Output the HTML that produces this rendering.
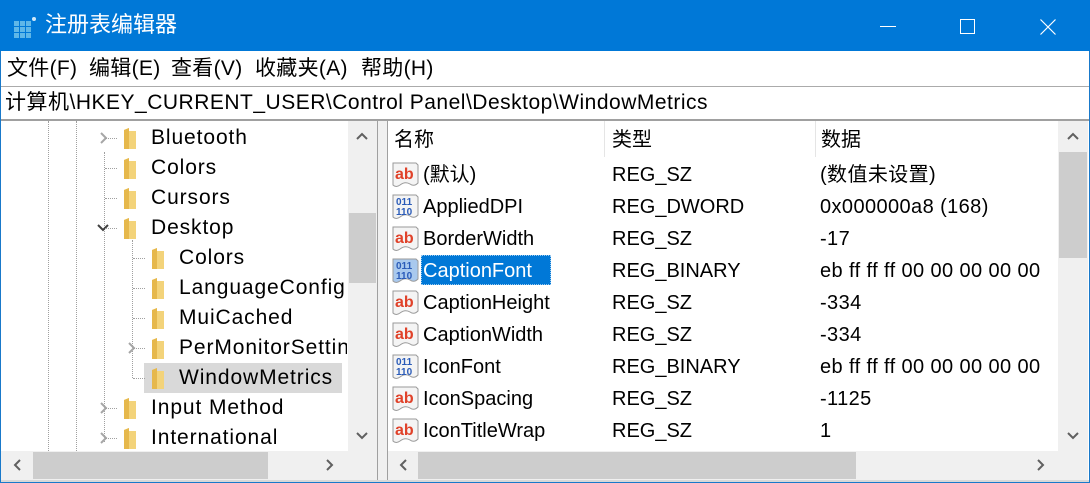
<!DOCTYPE html>
<html><head><meta charset="utf-8"><style>
*{margin:0;padding:0;box-sizing:border-box}
body{width:1090px;height:483px;overflow:hidden;background:#fff;font-family:"Liberation Sans","Noto Sans CJK SC",sans-serif;font-size:20px;color:#000;position:relative}
.a{position:absolute;white-space:nowrap}
.t{line-height:30px}
.dot{position:absolute;border-color:#a0a0a0;border-style:dotted;border-width:0}
.tr{font-size:21px;letter-spacing:0.9px}
</style></head><body>
<div class="a" style="left:0;top:0;width:1090px;height:483px;border:1px solid #1979ca"></div>
<div class="a" style="left:0;top:0;width:1090px;height:51px;background:#0078d7"></div>
<svg class="a" style="left:13px;top:16px" width="24" height="22" viewBox="0 0 24 22">
<g fill="#5fb7e8"><rect x="1" y="5" width="5" height="5"/><rect x="7" y="5" width="5" height="5"/><rect x="13" y="5" width="5" height="5"/><rect x="1" y="11" width="5" height="5"/><rect x="7" y="11" width="5" height="5"/><rect x="13" y="11" width="5" height="5"/><rect x="1" y="17" width="5" height="5"/><rect x="7" y="17" width="5" height="5"/><rect x="13" y="17" width="5" height="5"/></g><circle cx="21" cy="3" r="2" fill="#cfe8f8"/></svg>
<div class="a" style="left:45px;top:10px;color:#fff;font-size:22px;line-height:30px">注册表编辑器</div>
<div class="a" style="left:880px;top:26px;width:16px;height:1px;background:#fff"></div>
<div class="a" style="left:960px;top:19px;width:15px;height:15px;border:1px solid #fff"></div>
<svg class="a" style="left:1040px;top:19px" width="16" height="16"><path d="M0.5 0.5L15.5 15.5M15.5 0.5L0.5 15.5" stroke="#fff" stroke-width="1.2"/></svg>
<div class="a t" style="left:7px;top:54px;font-size:21px;letter-spacing:0.3px">文件(F)</div>
<div class="a t" style="left:89px;top:54px;font-size:21px;letter-spacing:0.3px">编辑(E)</div>
<div class="a t" style="left:171px;top:54px;font-size:21px;letter-spacing:0.3px">查看(V)</div>
<div class="a t" style="left:255px;top:54px;font-size:21px;letter-spacing:0.3px">收藏夹(A)</div>
<div class="a t" style="left:361px;top:54px;font-size:21px;letter-spacing:0.3px">帮助(H)</div>
<div class="a" style="left:1px;top:86px;width:1088px;height:1px;background:#ababab"></div>
<div class="a t" style="left:5px;top:88px;font-size:21px;letter-spacing:0.5px">计算机\HKEY_CURRENT_USER\Control Panel\Desktop\WindowMetrics</div>
<div class="a" style="left:1px;top:119px;width:1088px;height:2px;background:#a0a0a0"></div>
<div class="a" style="left:377px;top:121px;width:11px;height:360px;background:#f0f0f0;border-left:1px solid #a0a0a0;border-right:1px solid #a0a0a0"></div>
<div class="dot" style="left:48px;top:121px;height:330px;border-left-width:1px"></div>
<div class="dot" style="left:76px;top:121px;height:330px;border-left-width:1px"></div>
<div class="dot" style="left:104px;top:152px;height:290px;border-left-width:1px"></div>
<div class="dot" style="left:132px;top:240px;height:138px;border-left-width:1px"></div>
<div class="a" style="left:144px;top:363px;width:198px;height:30px;background:#d9d9d9"></div>
<div id="tree"></div>
<div class="a" style="left:348px;top:121px;width:29px;height:330px;background:#f0f0f0"></div>
<div class="a" style="left:349px;top:213px;width:27px;height:70px;background:#cdcdcd"></div>
<svg class="a" style="left:355px;top:131px" width="14" height="10"><path d="M2 8L7 3L12 8" stroke="#606060" stroke-width="2" fill="none"/></svg>
<svg class="a" style="left:355px;top:431px" width="14" height="10"><path d="M2 2L7 7L12 2" stroke="#606060" stroke-width="2" fill="none"/></svg>
<div class="a" style="left:1px;top:451px;width:376px;height:29px;background:#f0f0f0"></div>
<div class="a" style="left:33px;top:452px;width:235px;height:27px;background:#cdcdcd"></div>
<svg class="a" style="left:12px;top:458px" width="10" height="14"><path d="M8 2L3 7L8 12" stroke="#606060" stroke-width="2" fill="none"/></svg>
<svg class="a" style="left:325px;top:458px" width="10" height="14"><path d="M2 2L7 7L2 12" stroke="#606060" stroke-width="2" fill="none"/></svg>
<div class="a t" style="left:394px;top:125px">名称</div>
<div class="a t" style="left:612px;top:125px">类型</div>
<div class="a t" style="left:821px;top:125px">数据</div>
<div class="a" style="left:604px;top:121px;width:1px;height:36px;background:#e5e5e5"></div>
<div class="a" style="left:815px;top:121px;width:1px;height:36px;background:#e5e5e5"></div>
<div class="a" style="left:421px;top:255px;width:130px;height:30px;background:#0078d7;border:1px dotted #99c9ef"></div>
<div id="rows"></div>
<div class="a" style="left:1058px;top:121px;width:30px;height:330px;background:#f0f0f0"></div>
<div class="a" style="left:1059px;top:152px;width:28px;height:106px;background:#cdcdcd"></div>
<svg class="a" style="left:1066px;top:131px" width="14" height="10"><path d="M2 8L7 3L12 8" stroke="#606060" stroke-width="2" fill="none"/></svg>
<svg class="a" style="left:1066px;top:431px" width="14" height="10"><path d="M2 2L7 7L12 2" stroke="#606060" stroke-width="2" fill="none"/></svg>
<div class="a" style="left:388px;top:451px;width:700px;height:29px;background:#f0f0f0"></div>
<div class="a" style="left:418px;top:452px;width:438px;height:27px;background:#cdcdcd"></div>
<svg class="a" style="left:398px;top:458px" width="10" height="14"><path d="M8 2L3 7L8 12" stroke="#606060" stroke-width="2" fill="none"/></svg>
<svg class="a" style="left:1036px;top:458px" width="10" height="14"><path d="M2 2L7 7L2 12" stroke="#606060" stroke-width="2" fill="none"/></svg>
<div class="a" style="left:1px;top:480px;width:1088px;height:2px;background:#d8d8d8"></div>
<script>
var tree=[["Bluetooth",0,">"],["Colors",0,""],["Cursors",0,""],["Desktop",0,"v"],["Colors",1,""],["LanguageConfigu",1,""],["MuiCached",1,""],["PerMonitorSettin",1,">"],["WindowMetrics",1,""],["Input Method",0,">"],["International",0,">"]];
var h="";
tree.forEach(function(r,i){var y=123+i*30,l=r[1];var fx=l?150:122,tx=l?179:151,cx=l?126:98;
if(r[2]==">")h+='<svg class="a" style="left:'+cx+'px;top:'+(y+8)+'px" width="12" height="14"><path d="M3 2L8 7L3 12" stroke="#a6a6a6" stroke-width="2" fill="none"/></svg>';
if(r[2]=="v")h+='<svg class="a" style="left:'+(cx-2)+'px;top:'+(y+10)+'px" width="14" height="10"><path d="M2 2L7 7L12 2" stroke="#404040" stroke-width="2" fill="none"/></svg>';
h+='<div class="dot" style="left:'+(l?133:105)+'px;top:'+(y+15)+'px;width:12px;border-top-width:1px"></div>';
h+='<svg class="a" style="left:'+fx+'px;top:'+(y+4)+'px" width="16" height="24"><path d="M2 3L7 1L7 4L14 4L14 22L2 22Z" fill="#f3d37a"/><path d="M2 3L7 1L7 22L2 22Z" fill="#e6b84c"/></svg>';
h+='<div class="a t tr" style="left:'+tx+'px;top:'+y+'px;height:30px;overflow:hidden;width:'+(347-tx)+'px">'+r[0]+'</div>';});
document.getElementById("tree").innerHTML=h;
var rows=[["ab","(默认)","REG_SZ","(数值未设置)"],["b","AppliedDPI","REG_DWORD","0x000000a8 (168)"],["ab","BorderWidth","REG_SZ","-17"],["b","CaptionFont","REG_BINARY","eb ff ff ff 00 00 00 00 00"],["ab","CaptionHeight","REG_SZ","-334"],["ab","CaptionWidth","REG_SZ","-334"],["b","IconFont","REG_BINARY","eb ff ff ff 00 00 00 00 00"],["ab","IconSpacing","REG_SZ","-1125"],["ab","IconTitleWrap","REG_SZ","1"]];
h="";
rows.forEach(function(r,i){var y=159+i*32;var sel=i==3;
h+='<svg class="a" style="left:392px;top:'+(y+3)+'px" width="27" height="26"><path d="M1 1L24 1L26 3L26 21Q22 25 18 22Q13 19 8 23Q4 26 1 23Z" fill="'+(sel?'#a9c9ee':'#f4f4f4')+'" stroke="#9a9a9a"/>'+
(r[0]=="ab"?'<text x="3" y="17" font-family="Liberation Sans" font-weight="bold" font-size="16" fill="#e0422a">ab</text>':'<text x="4" y="11" font-family="Liberation Sans" font-weight="bold" font-size="10" fill="#2a5bb8">011</text><text x="4" y="21" font-family="Liberation Sans" font-weight="bold" font-size="10" fill="#2a5bb8">110</text>')+'</svg>';
h+='<div class="a t" style="left:423px;top:'+(y+1)+'px;'+(sel?'color:#fff':'')+'">'+r[1]+'</div>';
h+='<div class="a t" style="left:612px;top:'+(y+1)+'px">'+r[2]+'</div>';
h+='<div class="a t" style="left:820px;top:'+(y+1)+'px;width:237px;overflow:hidden;letter-spacing:0.4px">'+r[3]+'</div>';});
document.getElementById("rows").innerHTML=h;
</script>
</body></html>
